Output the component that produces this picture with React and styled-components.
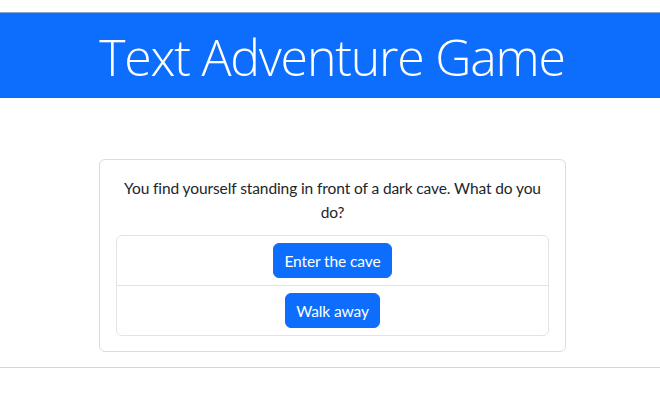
import React from "react";
import styled, { createGlobalStyle } from "styled-components";

const GlobalStyle = createGlobalStyle`
  body {
    margin: 0;
    background: #fff;
    color: #212529;
    font-family: "Segoe UI", Lato, "Liberation Sans", sans-serif;
    font-size: 15.5px;
    letter-spacing: -0.1px;
    line-height: 24px;
  }
`;

const Header = styled.header`
  margin-top: 12px;
  height: 84px;
  background-color: #0d6efd;
  border-top: 1px solid #8aa6cc;
  border-bottom: 1px solid #1a6ae0;
  display: flex;
  align-items: center;
  justify-content: center;
`;

const Title = styled.h1`
  margin: 0;
  padding: 4px 0 0 4px;
  color: #fff;
  font-family: "Segoe UI", "Open Sans", sans-serif;
  font-weight: 300;
  font-size: 50px;
  line-height: 1.2;
  letter-spacing: -1.2px;
`;

const Main = styled.main`
  padding: 61px 0 0 5px;
`;

const Card = styled.div`
  width: 467px;
  margin: 0 auto;
  box-sizing: border-box;
  padding: 16px 16px 15px;
  border: 1px solid #dcdcdc;
  border-radius: 6px;
`;

const Prompt = styled.p`
  margin: 0 0 11px;
  text-align: center;
`;

const ChoiceList = styled.ul`
  list-style: none;
  margin: 0;
  padding: 0;
  border: 1px solid #e3e3e3;
  border-radius: 6px;
`;

const Choice = styled.li`
  display: flex;
  justify-content: center;
  padding: 7px 16px;
  border-top: ${({ first }) => (first ? "none" : "1px solid #e3e3e3")};
`;

const ChoiceButton = styled.button`
  height: 35px;
  padding: 0 10px;
  border: 1px solid #0d6efd;
  border-radius: 6px;
  background-color: #0d6efd;
  color: #fff;
  font-family: inherit;
  font-size: 15.5px;
  letter-spacing: -0.1px;
  cursor: pointer;
`;

const Rule = styled.hr`
  margin: 15px 0 0;
  border: 0;
  border-top: 1px solid #d6d6d6;
`;

const choices = ["Enter the cave", "Walk away"];

export default function App() {
  return (
    <>
      <GlobalStyle />
      <Header>
        <Title>Text Adventure Game</Title>
      </Header>
      <Main>
        <Card>
          <Prompt>
            You find yourself standing in front of a dark cave. What do you do?
          </Prompt>
          <ChoiceList>
            {choices.map((c, i) => (
              <Choice key={c} first={i === 0}>
                <ChoiceButton>{c}</ChoiceButton>
              </Choice>
            ))}
          </ChoiceList>
        </Card>
      </Main>
      <Rule />
    </>
  );
}
